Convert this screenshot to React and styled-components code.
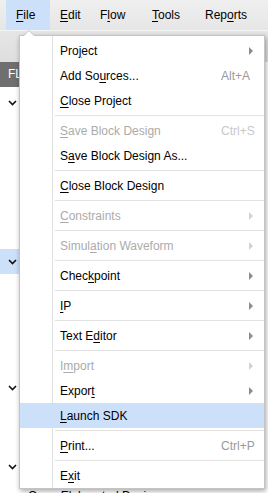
import styled, { createGlobalStyle } from "styled-components";

const GlobalStyle = createGlobalStyle`
  html, body {
    margin: 0;
    padding: 0;
  }
  body {
    font-family: "Liberation Sans", Arial, sans-serif;
    font-size: 12px;
    color: #000;
  }
`;

const Screen = styled.div`
  position: relative;
  width: 268px;
  height: 493px;
  overflow: hidden;
  background: #fff;
`;

const MenuBar = styled.div`
  display: flex;
  height: 30px;
  padding-left: 6px;
  background: linear-gradient(#efefef, #e6e6e6);
`;

const MenuTitle = styled.div`
  width: ${(p) => p.$w}px;
  box-sizing: border-box;
  padding-left: 10px;
  line-height: 30px;
  white-space: nowrap;
  background: ${(p) => (p.$open ? "#cce0fa" : "transparent")};
`;

const Toolbar = styled.div`
  height: 32px;
  background: linear-gradient(#e6e6e6, #dedede);
  border-top: 1px solid #f4f4f4;
  box-sizing: border-box;
`;

const Workspace = styled.div`
  display: flex;
`;

const Navigator = styled.div`
  width: 200px;
  display: flex;
  flex-direction: column;
`;

const NavHeader = styled.div`
  height: 25px;
  padding-left: 8px;
  line-height: 25px;
  color: #fff;
  background: #6f6f6f;
  white-space: nowrap;
`;

const Tree = styled.div`
  display: flex;
  flex-direction: column;
  padding-top: 3px;
`;

const Group = styled.div`
  display: flex;
  flex-direction: column;
  margin-bottom: ${(p) => p.$after}px;
`;

const GroupHead = styled.div`
  display: flex;
  align-items: center;
  height: ${(p) => p.$h || 26}px;
  padding-left: 8px;
  background: ${(p) => (p.$selected ? "#cce0fa" : "transparent")};
`;

const TreeRow = styled.div`
  height: 26px;
  padding: 3px 0 0 28px;
  box-sizing: border-box;
  line-height: 26px;
  white-space: nowrap;
`;

const Popup = styled.div`
  position: absolute;
  left: 19px;
  top: 35px;
  width: 246px;
  box-sizing: border-box;
  padding: 2px 0 0;
  background: #fff linear-gradient(#e2e2e2, #e2e2e2) no-repeat 32px 0 / 1px 100%;
  border: 1px solid #c4c4c4;
  box-shadow: 1px 2px 5px rgba(0, 0, 0, 0.35);

  &::before,
  &::after {
    content: "";
    position: absolute;
    width: 0;
    height: 0;
    border-left: 6px solid transparent;
    border-right: 6px solid transparent;
  }
  &::before {
    top: -6px;
    left: 3px;
    border-bottom: 6px solid #c4c4c4;
  }
  &::after {
    top: -5px;
    left: 4px;
    border-left-width: 5px;
    border-right-width: 5px;
    border-bottom: 5px solid #fff;
  }
`;

const Item = styled.div`
  display: flex;
  align-items: center;
  height: 25px;
  padding-left: 40px;
  color: ${(p) => (p.$disabled ? "#ababab" : "#000")};
  background: ${(p) => (p.$active ? "#cce0fa" : "transparent")};
`;

const ItemLabel = styled.span`
  flex: 1;
  white-space: nowrap;
`;

const Side = styled.span`
  width: 43px;
  white-space: nowrap;
  color: ${(p) => (p.$disabled ? "#c8c8c8" : "#9a9a9a")};
`;

const Arrow = styled.span`
  display: block;
  margin-left: 28px;
  width: 0;
  height: 0;
  border-top: 4px solid transparent;
  border-bottom: 4px solid transparent;
  border-left: 4px solid ${(p) => (p.$disabled ? "#d2d2d2" : "#8c8c8c")};
`;

const Sep = styled.div`
  height: 5px;
  margin-left: 35px;
  background: linear-gradient(#e2e2e2, #e2e2e2) no-repeat 0 2px / 100% 1px;
`;

const Key = styled.span`
  text-decoration: underline;
  text-underline-offset: 2px;
`;

function Label({ text }) {
  const i = text.indexOf("&");
  if (i < 0) return text;
  return (
    <>
      {text.slice(0, i)}
      <Key>{text[i + 1]}</Key>
      {text.slice(i + 2)}
    </>
  );
}

function Chevron() {
  return (
    <svg width="9" height="6" viewBox="0 0 9 6">
      <polyline points="1,1 4.5,4.5 8,1" fill="none" stroke="#111" strokeWidth="1.6" />
    </svg>
  );
}

const titles = [
  { text: "&File", w: 44, open: true },
  { text: "&Edit", w: 40 },
  { text: "F&low", w: 52 },
  { text: "&Tools", w: 53 },
  { text: "Rep&orts", w: 60 },
];

// rows hidden under the open menu are left empty
const groups = [
  { id: "pm", rows: 4, after: 29 },
  { id: "ipi", h: 25, selected: true, rows: 3, after: 23 },
  { id: "sim", rows: 1, after: 27 },
  { id: "rtl", rows: 0, after: 0, last: "Open Elaborated Design" },
];

const menu = [
  { text: "Pro&ject", sub: true },
  { text: "Add So&urces...", key: "Alt+A" },
  { text: "&Close Project" },
  "-",
  { text: "&Save Block Design", key: "Ctrl+S", disabled: true },
  { text: "S&ave Block Design As..." },
  "-",
  { text: "&Close Block Design" },
  "-",
  { text: "&Constraints", sub: true, disabled: true },
  "-",
  { text: "Simul&ation Waveform", sub: true, disabled: true },
  "-",
  { text: "Chec&kpoint", sub: true },
  "-",
  { text: "&IP", sub: true },
  "-",
  { text: "Text E&ditor", sub: true },
  "-",
  { text: "I&mport", sub: true, disabled: true },
  { text: "Expor&t", sub: true },
  { text: "&Launch SDK", active: true },
  "-",
  { text: "&Print...", key: "Ctrl+P" },
  "-",
  { text: "E&xit" },
];

function App() {
  return (
    <Screen>
      <GlobalStyle />
      <MenuBar>
        {titles.map((t) => (
          <MenuTitle key={t.text} $w={t.w} $open={t.open}>
            <Label text={t.text} />
          </MenuTitle>
        ))}
      </MenuBar>
      <Toolbar />
      <Workspace>
        <Navigator>
          <NavHeader>FL</NavHeader>
          <Tree>
            {groups.map((g) => (
              <Group key={g.id} $after={g.after}>
                <GroupHead $h={g.h} $selected={g.selected}>
                  <Chevron />
                </GroupHead>
                {Array.from({ length: g.rows }, (_, k) => (
                  <TreeRow key={k} />
                ))}
                {g.last && <TreeRow>{g.last}</TreeRow>}
              </Group>
            ))}
          </Tree>
        </Navigator>
      </Workspace>

      <Popup>
        {menu.map((m, i) =>
          m === "-" ? (
            <Sep key={i} />
          ) : (
            <Item key={i} $disabled={m.disabled} $active={m.active}>
              <ItemLabel>
                <Label text={m.text} />
              </ItemLabel>
              <Side $disabled={m.disabled}>
                {m.key}
                {m.sub && <Arrow $disabled={m.disabled} />}
              </Side>
            </Item>
          )
        )}
      </Popup>
    </Screen>
  );
}

export default App;
